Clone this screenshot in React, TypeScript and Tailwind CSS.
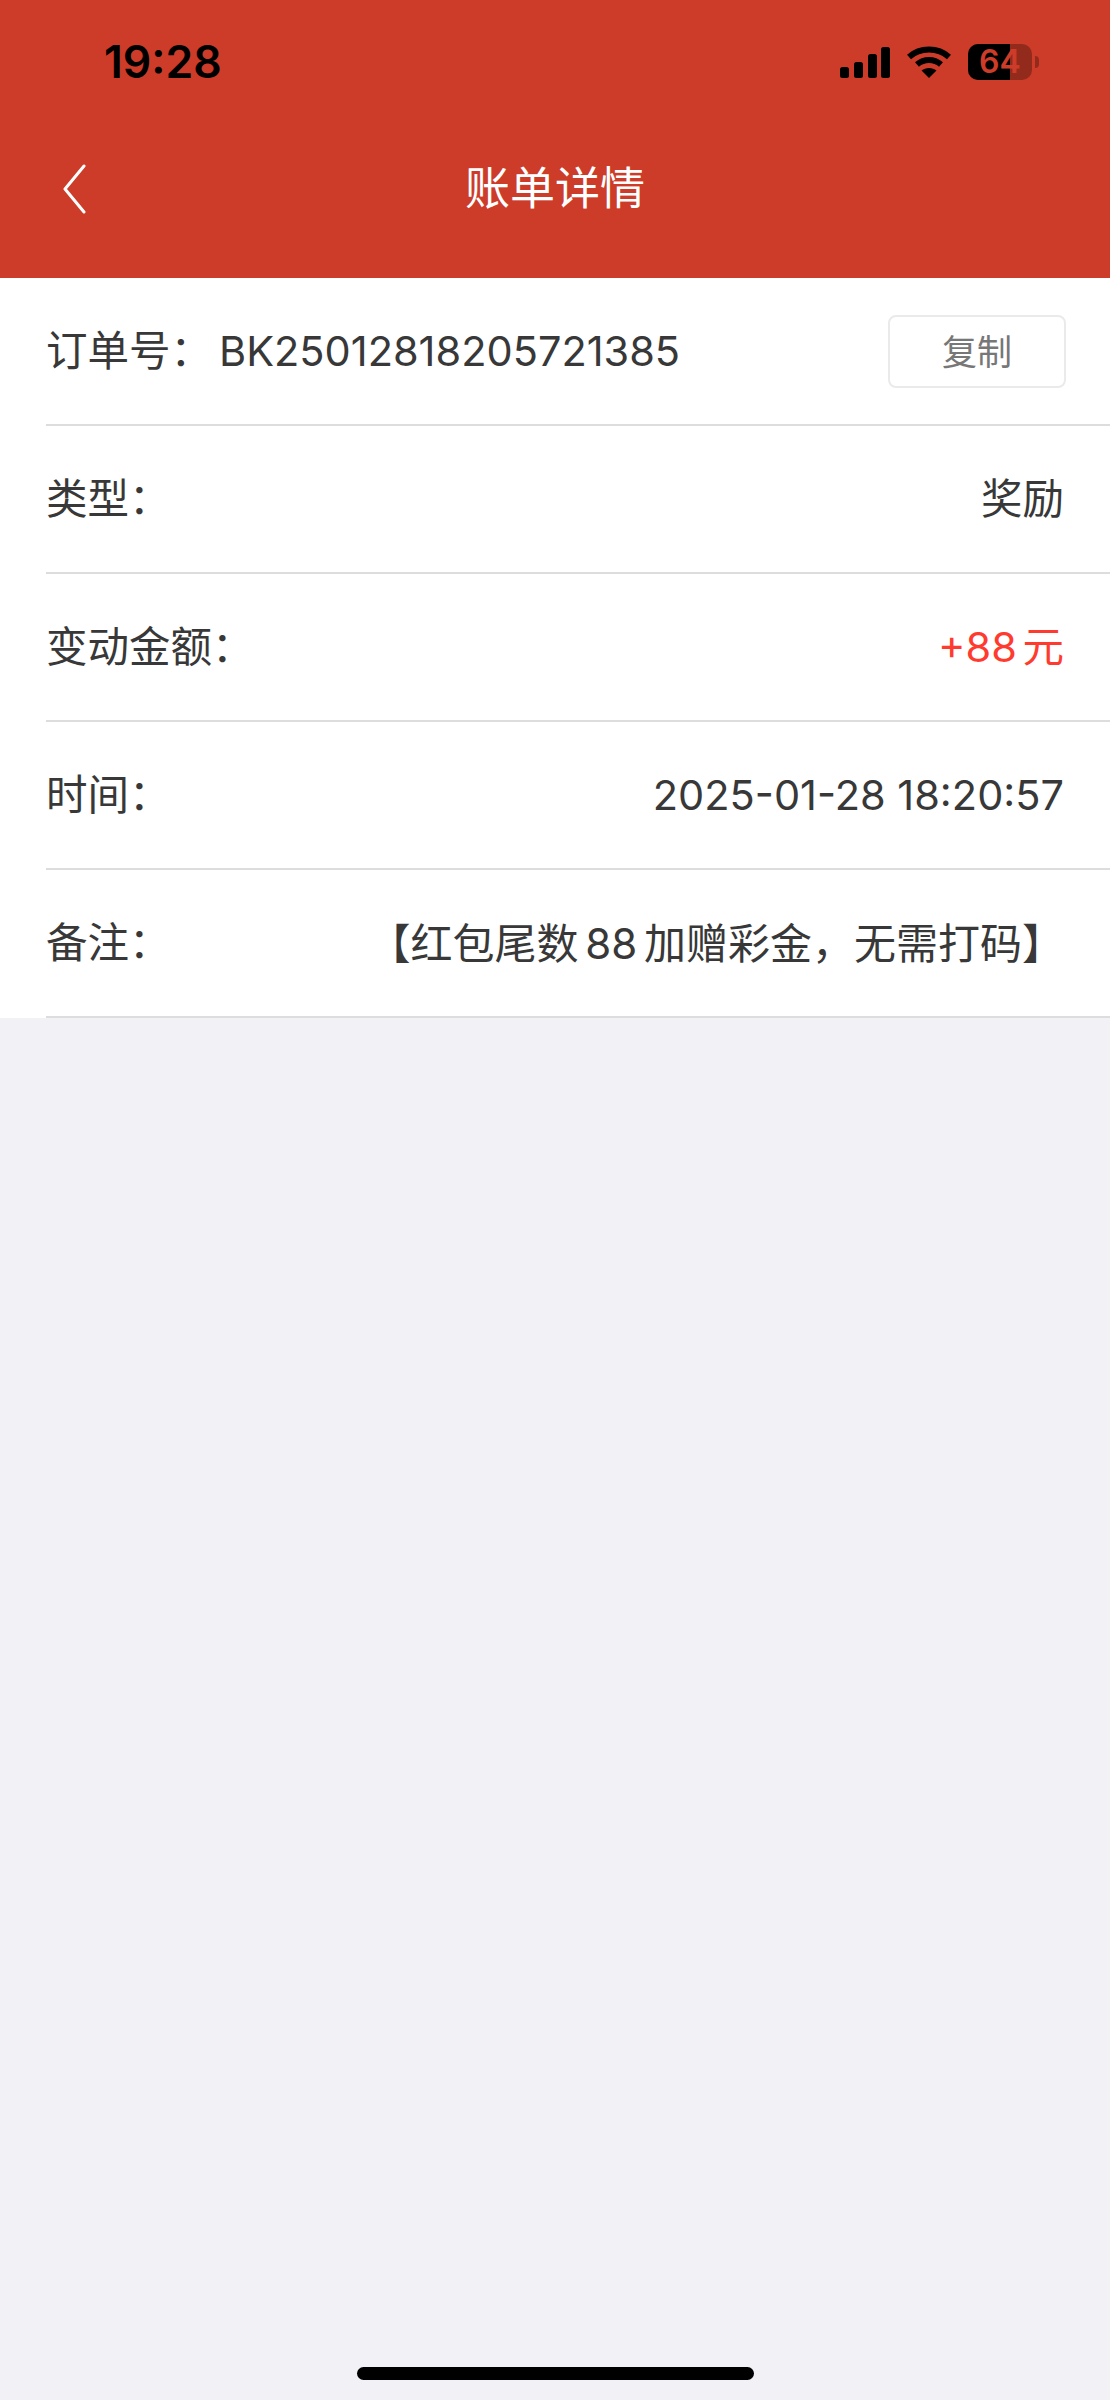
const rows = [
  { label: "类型：", value: "奖励", valueClass: "text-[#383838]" },
  { label: "变动金额：", value: "+88 元", valueClass: "text-[#ff3b30] [word-spacing:-6px]" },
  { label: "时间：", value: "2025-01-28 18:20:57", valueClass: "text-[#383838]" },
  { label: "备注：", value: "【红包尾数 88 加赠彩金，无需打码】", valueClass: "text-[42px] text-[#383838] [word-spacing:-5px]" },
];

function StatusBar() {
  return (
    <div className="flex h-[124px] items-center justify-between pl-[104px] pr-[71px]">
      <span className="font-['Inter','Liberation_Sans',sans-serif] text-[44.5px] leading-none font-semibold text-black">
        19:28
      </span>
      <div className="flex items-center gap-[17px]">
        <svg width="50" height="31" viewBox="0 0 50 31" fill="black">
          <rect x="0" y="20" width="9" height="11" rx="2.5" />
          <rect x="14" y="15" width="9" height="16" rx="2.5" />
          <rect x="28" y="7" width="9" height="24" rx="2.5" />
          <rect x="41" y="0" width="9" height="31" rx="2.5" />
        </svg>
        <svg width="44" height="32" viewBox="0 0 44 32" fill="none" stroke="black" strokeWidth="6">
          <path d="M2 11C13 1 31 1 42 11" />
          <path d="M10 18.5C17 12.5 27 12.5 34 18.5" />
          <path d="M22 32L14.5 24.5C18.5 21 25.5 21 29.5 24.5Z" fill="black" stroke="none" />
        </svg>
        <div className="flex items-center gap-[3px]">
          <div className="relative flex h-[36px] w-[64px] items-center justify-center rounded-[10px] bg-[#922b1c]">
            <div className="absolute inset-y-0 left-0 w-[42px] rounded-l-[10px] bg-black" />
            <span className="relative font-['Inter','Liberation_Sans',sans-serif] text-[32px] leading-none font-semibold text-[#cd3b29]">
              64
            </span>
          </div>
          <div className="h-[12px] w-[4px] rounded-r-full bg-[#922b1c]" />
        </div>
      </div>
    </div>
  );
}

function NavBar() {
  return (
    <div className="relative flex h-[154px] items-start justify-center pt-[33px]">
      <svg className="absolute left-[62px] top-[40px]" width="24" height="50" viewBox="0 0 24 50" fill="none" stroke="white" strokeWidth="3" strokeLinecap="round" strokeLinejoin="round">
        <path d="M22 2L3 25L22 48" />
      </svg>
      <span className="text-[45px] leading-[64px] text-white">账单详情</span>
    </div>
  );
}

export default function App() {
  return (
    <div className="flex h-[2400px] flex-col bg-[#f1f1f6] font-['Inter','Noto_Sans_CJK_SC',sans-serif]">
      <div className="bg-[#cd3b29]">
        <StatusBar />
        <NavBar />
      </div>
      <div className="bg-white pl-[46px] text-[41.5px] leading-none">
        <div className="flex h-[148px] items-center justify-between border-b-2 border-[#dddddd] pr-[44px] text-[#383838]">
          <div className="flex items-center pt-[2px]">
            <span className="w-[173px]">订单号：</span>
            <span>BK25012818205721385</span>
          </div>
          <button className="flex h-[73px] w-[178px] items-center justify-center rounded-[8px] border-2 border-[#eaeaea] pt-[2px] text-[35px] text-[#777777]">
            复制
          </button>
        </div>
        {rows.map((row) => (
          <div
            key={row.label}
            className="flex h-[148px] items-center justify-between border-b-2 border-[#dddddd] pr-[46px] pt-[2px]"
          >
            <span className="text-[#383838]">{row.label}</span>
            <span className={row.valueClass}>{row.value}</span>
          </div>
        ))}
      </div>
      <div className="mt-auto flex justify-center pb-[20px]">
        <div className="h-[13px] w-[397px] rounded-full bg-black" />
      </div>
    </div>
  );
}
